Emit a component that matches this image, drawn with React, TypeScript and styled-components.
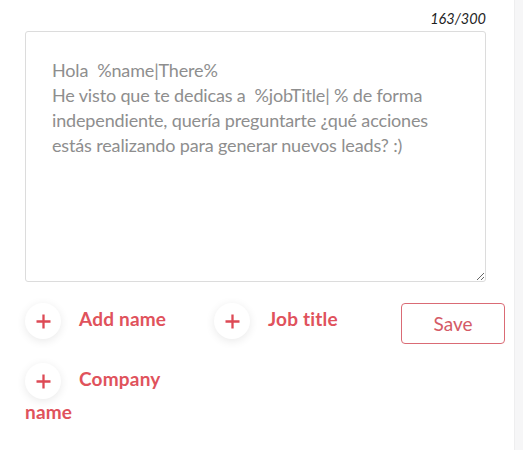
import styled, { createGlobalStyle } from 'styled-components';

const GlobalStyle = createGlobalStyle`
  html, body { margin: 0; padding: 0; background: #ffffff; }
  body { font-family: "Lato", "Open Sans", sans-serif; }
  * { box-sizing: border-box; }
`;

const Page = styled.div`
  display: flex;
  width: 523px;
  height: 450px;
  overflow: hidden;
`;

const Panel = styled.div`
  width: 514px;
  flex-shrink: 0;
  padding: 8px 9px 0 25px;
  display: flex;
  flex-direction: column;
`;

const Strip = styled.div`
  flex: 1;
  background: #f6f6f7;
  border-left: 1px solid #eeeeef;
`;

const Counter = styled.div`
  width: 461px;
  text-align: right;
  font-size: 14.5px;
  font-style: italic;
  color: #1e1e1e;
  line-height: 22px;
  height: 23px;
`;

const Message = styled.textarea`
  width: 461px;
  height: 251px;
  padding: 26px 50px 26px 26px;
  border: 1px solid #dcdcdc;
  border-radius: 3px;
  font-family: "Lato", "Open Sans", sans-serif;
  font-size: 18px;
  line-height: 25px;
  color: #8e8e8e;
  letter-spacing: -0.15px;
  resize: vertical;
  outline: none;
  background: #fff;
`;

const Actions = styled.div`
  display: flex;
  align-items: flex-start;
  margin-top: 21px;
`;

const Tags = styled.div`
  flex: 1;
  display: flex;
  flex-wrap: wrap;
  row-gap: 24px;
  column-gap: 14px;
`;

const Tag = styled.div`
  width: 175px;
  font-size: 19px;
  font-weight: 700;
  letter-spacing: 0.2px;
  color: #e0525c;
  line-height: 26px;
  cursor: pointer;
`;

const Circle = styled.span`
  display: inline-flex;
  align-items: center;
  justify-content: center;
  width: 36px;
  height: 36px;
  border-radius: 50%;
  background: #fff;
  box-shadow: 0 2px 10px rgba(0, 0, 0, 0.09);
  vertical-align: middle;
  margin-right: 18px;
  color: #dd4a55;
`;

const SaveButton = styled.button`
  width: 104px;
  height: 41px;
  border: 1.5px solid #da6b75;
  border-radius: 4px;
  background: #fff;
  color: #d45a66;
  font-family: "Lato", "Open Sans", sans-serif;
  font-size: 19px;
  cursor: pointer;
`;

function Plus() {
  return (
    <svg width="15" height="15" viewBox="0 0 15 15">
      <path d="M7.5 0.5v14M0.5 7.5h14" stroke="currentColor" strokeWidth="2.3" />
    </svg>
  );
}

const text =
  'Hola  %name|There%\nHe visto que te dedicas a  %jobTitle| % de forma independiente, quería preguntarte ¿qué acciones estás realizando para generar nuevos leads? :)';

export default function App() {
  const tags = ['Add name', 'Job title', 'Company name'];
  return (
    <Page>
      <GlobalStyle />
      <Panel>
        <Counter>163/300</Counter>
        <Message defaultValue={text} />
        <Actions>
          <Tags>
            {tags.map((t) => (
              <Tag key={t}>
                <Circle><Plus /></Circle>
                {t}
              </Tag>
            ))}
          </Tags>
          <SaveButton>Save</SaveButton>
        </Actions>
      </Panel>
      <Strip />
    </Page>
  );
}
